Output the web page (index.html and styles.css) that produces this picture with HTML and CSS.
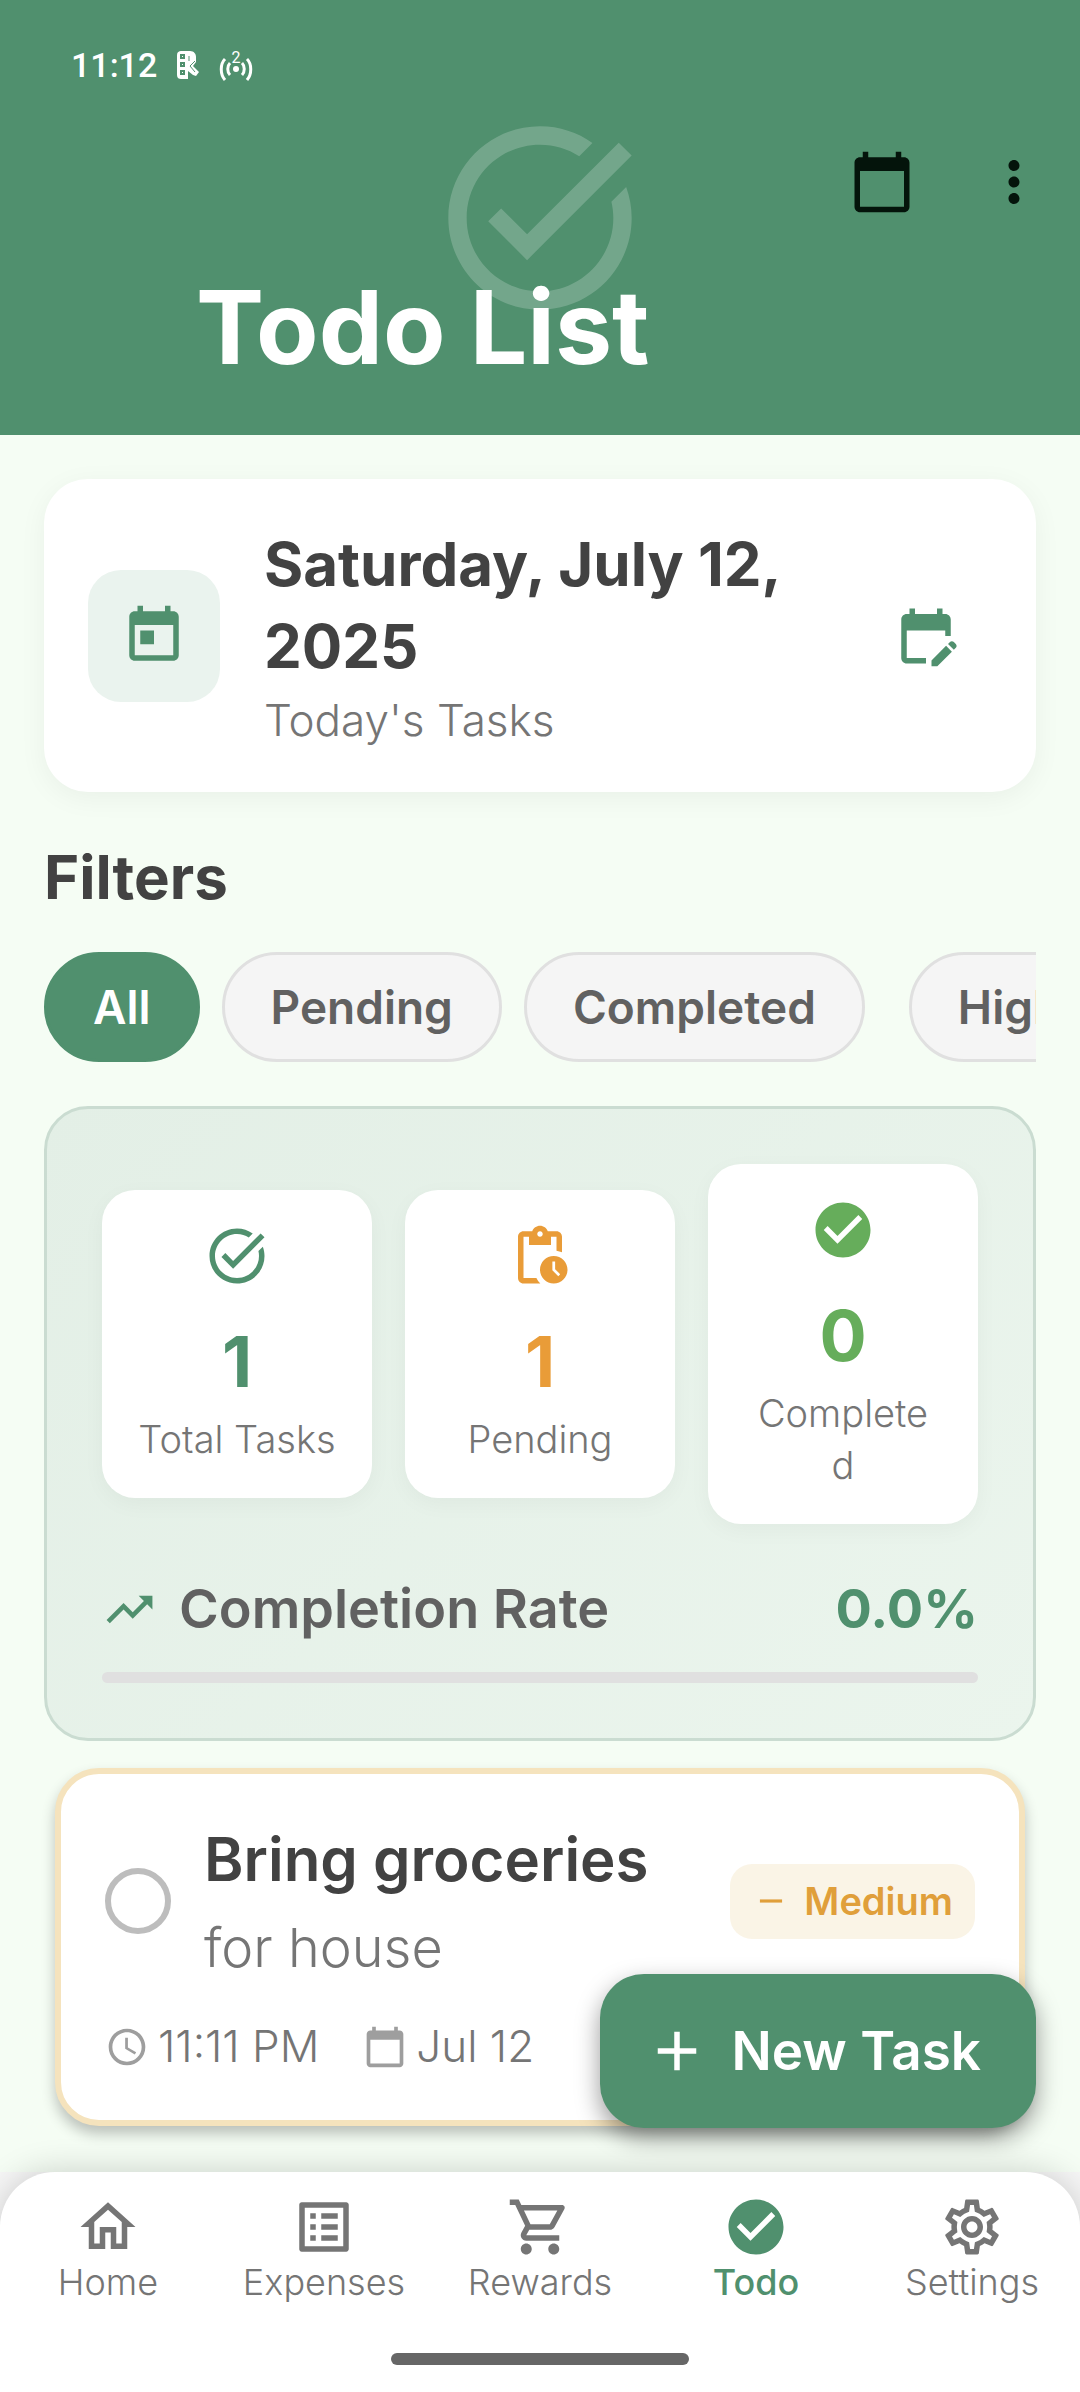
FILE: index.html
```html
<!DOCTYPE html>
<html lang="en">
<head>
<meta charset="utf-8">
<meta name="viewport" content="width=device-width, initial-scale=1">
<title>Todo List</title>
<link rel="stylesheet" href="styles.css">
</head>
<body>
<svg class="sprite" aria-hidden="true">
  <symbol id="task-alt" viewBox="0 0 24 24"><path d="M22 5.18L10.59 16.6l-4.24-4.24 1.41-1.41 2.83 2.83 10-10L22 5.18zM19.79 10.22C19.92 10.79 20 11.39 20 12c0 4.42-3.58 8-8 8s-8-3.58-8-8c0-4.42 3.58-8 8-8 1.58 0 3.04.46 4.28 1.25l1.44-1.44C16.1 2.67 14.13 2 12 2 6.48 2 2 6.48 2 12s4.48 10 10 10 10-4.48 10-10c0-1.19-.22-2.33-.6-3.39l-1.61 1.61z"/></symbol>
  <symbol id="calendar" viewBox="0 0 24 24"><path d="M20 3h-1V1h-2v2H7V1H5v2H4c-1.1 0-2 .9-2 2v16c0 1.1.9 2 2 2h16c1.1 0 2-.9 2-2V5c0-1.1-.9-2-2-2zm0 18H4V8h16v13z"/></symbol>
  <symbol id="more" viewBox="0 0 24 24"><path d="M12 8c1.1 0 2-.9 2-2s-.9-2-2-2-2 .9-2 2 .9 2 2 2zm0 2c-1.1 0-2 .9-2 2s.9 2 2 2 2-.9 2-2-.9-2-2-2zm0 6c-1.1 0-2 .9-2 2s.9 2 2 2 2-.9 2-2-.9-2-2-2z"/></symbol>
  <symbol id="today" viewBox="0 0 24 24"><path d="M19 3h-1V1h-2v2H8V1H6v2H5c-1.11 0-1.99.9-1.99 2L3 19c0 1.1.89 2 2 2h14c1.1 0 2-.9 2-2V5c0-1.1-.9-2-2-2zm0 16H5V8h14v11zM7 10h5v5H7z"/></symbol>
  <symbol id="edit-calendar" viewBox="0 0 24 24"><path d="M12 22H5c-1.11 0-2-.9-2-2L3.01 6c0-1.1.88-2 1.99-2h1V2h2v2h8V2h2v2h1c1.1 0 2 .9 2 2v6h-2v-2H5v10h7v2zM22.13 16.99l.71-.71c.39-.39.39-1.02 0-1.41l-.71-.71c-.39-.39-1.02-.39-1.41 0l-.71.71 2.12 2.12zM21.42 17.7l-5.3 5.3H14v-2.12l5.3-5.3 2.12 2.12z"/></symbol>
  <symbol id="pending" viewBox="0 0 24 24"><path d="M17 12c-2.76 0-5 2.24-5 5s2.24 5 5 5 5-2.24 5-5-2.24-5-5-5zm1.65 7.35L16.5 17.2V14h1v2.79l1.85 1.85-.7.71zM18 3h-3.18C14.4 1.84 13.3 1 12 1s-2.4.84-2.82 2H6c-1.1 0-2 .9-2 2v15c0 1.1.9 2 2 2h6.11c-.59-.57-1.07-1.25-1.42-2H6V5h2v3h8V5h2v5.08c.71.1 1.38.31 2 .6V5c0-1.1-.9-2-2-2zm-6 2c-.55 0-1-.45-1-1s.45-1 1-1 1 .45 1 1-.45 1-1 1z"/></symbol>
  <symbol id="check-circle" viewBox="0 0 24 24"><path d="M12 2C6.48 2 2 6.48 2 12s4.48 10 10 10 10-4.48 10-10S17.52 2 12 2zm-2 15l-5-5 1.41-1.41L10 14.17l7.59-7.59L19 8l-9 9z"/></symbol>
  <symbol id="trending" viewBox="0 0 24 24"><path d="M16 6l2.29 2.29-4.88 4.88-4-4L2 16.59 3.41 18l6-6 4 4 6.3-6.29L22 12V6z"/></symbol>
  <symbol id="clock" viewBox="0 0 24 24"><path d="M11.99 2C6.47 2 2 6.48 2 12s4.47 10 9.99 10C17.52 22 22 17.52 22 12S17.52 2 11.99 2zM12 20c-4.42 0-8-3.58-8-8s3.58-8 8-8 8 3.58 8 8-3.58 8-8 8zm.5-13H11v6l5.25 3.15.75-1.23-4.5-2.67z"/></symbol>
  <symbol id="minus" viewBox="0 0 24 24"><path d="M19 13H5v-2h14v2z"/></symbol>
  <symbol id="plus" viewBox="0 0 24 24"><path d="M19 13h-6v6h-2v-6H5v-2h6V5h2v6h6v2z"/></symbol>
  <symbol id="home" viewBox="0 0 24 24"><path d="M12 5.69l5 4.5V18h-2v-6H9v6H7v-7.81l5-4.5M12 3L2 12h3v8h6v-6h2v6h6v-8h3L12 3z"/></symbol>
  <symbol id="list" viewBox="0 0 24 24"><path d="M19 5v14H5V5h14m1.1-2H3.9c-.5 0-.9.4-.9.9v16.2c0 .4.4.9.9.9h16.2c.4 0 .9-.5.9-.9V3.9c0-.5-.5-.9-.9-.9zM11 7h6v2h-6V7zm0 4h6v2h-6v-2zm0 4h6v2h-6zM7 7h2v2H7zm0 4h2v2H7zm0 4h2v2H7z"/></symbol>
  <symbol id="cart" viewBox="0 0 24 24"><path d="M15.55 13c.75 0 1.41-.41 1.75-1.03l3.58-6.49c.37-.66-.11-1.48-.87-1.48H5.21l-.94-2H1v2h2l3.6 7.59-1.35 2.44C4.52 15.37 5.48 17 7 17h12v-2H7l1.1-2h7.45zM6.16 6h12.15l-2.76 5H8.53L6.16 6zM7 18c-1.1 0-1.99.9-1.99 2S5.9 22 7 22s2-.9 2-2-.9-2-2-2zm10 0c-1.1 0-1.99.9-1.99 2s.89 2 1.99 2 2-.9 2-2-.9-2-2-2z"/></symbol>
  <symbol id="settings" viewBox="0 0 24 24"><path d="M19.43 12.98c.04-.32.07-.64.07-.98 0-.34-.03-.66-.07-.98l2.11-1.65c.19-.15.24-.42.12-.64l-2-3.46c-.09-.16-.26-.25-.44-.25-.06 0-.12.01-.17.03l-2.49 1c-.52-.4-1.08-.73-1.69-.98l-.38-2.65C14.46 2.18 14.25 2 14 2h-4c-.25 0-.46.18-.49.42l-.38 2.65c-.61.25-1.17.59-1.69.98l-2.49-1c-.06-.02-.12-.03-.18-.03-.17 0-.34.09-.43.25l-2 3.46c-.13.22-.07.49.12.64l2.11 1.65c-.04.32-.07.65-.07.98 0 .33.03.66.07.98l-2.11 1.65c-.19.15-.24.42-.12.64l2 3.46c.09.16.26.25.44.25.06 0 .12-.01.17-.03l2.49-1c.52.4 1.08.73 1.69.98l.38 2.65c.03.24.24.42.49.42h4c.25 0 .46-.18.49-.42l.38-2.65c.61-.25 1.17-.59 1.69-.98l2.49 1c.06.02.12.03.18.03.17 0 .34-.09.43-.25l2-3.46c.12-.22.07-.49-.12-.64l-2.11-1.65zm-1.98-1.71c.04.31.05.52.05.73 0 .21-.02.43-.05.73l-.14 1.13.89.7 1.08.84-.7 1.21-1.27-.51-1.04-.42-.9.68c-.43.32-.84.56-1.25.73l-1.06.43-.16 1.13-.2 1.35h-1.4l-.19-1.35-.16-1.13-1.06-.43c-.43-.18-.83-.41-1.23-.71l-.91-.7-1.06.43-1.27.51-.7-1.21 1.08-.84.89-.7-.14-1.13c-.03-.31-.05-.54-.05-.74s.02-.43.05-.73l.14-1.13-.89-.7-1.08-.84.7-1.21 1.27.51 1.04.42.9-.68c.43-.32.84-.56 1.25-.73l1.06-.43.16-1.13.2-1.35h1.39l.19 1.35.16 1.13 1.06.43c.43.18.83.41 1.23.71l.91.7 1.06-.43 1.27-.51.7 1.21-1.07.85-.89.7.14 1.13zM12 8c-2.21 0-4 1.79-4 4s1.79 4 4 4 4-1.79 4-4-1.79-4-4-4zm0 6c-1.1 0-2-.9-2-2s.9-2 2-2 2 .9 2 2-.9 2-2 2z"/></symbol>
</svg>
<div class="app">
  <header class="header">
    <svg class="watermark" aria-hidden="true"><use href="#task-alt"/></svg>
    <div class="status">
      <span class="time">11:12</span>
      <svg class="status-app" viewBox="0 0 22 28" aria-hidden="true">
        <path d="M4 0h9c4 0 6 3 6 6v5l-3 4 6 6-3 4-3-1-5-4v8H4c-2 0-4-1-4-4V4c0-3 2-4 4-4z" fill="#fff"/>
        <path d="M4 4h3v3H4zM4 12h3v3H4zM4 20h3v3H4z" fill="none" stroke="#50906e" stroke-width="2"/>
        <path d="M12 5v5M18 10l-5 5 5 6" fill="none" stroke="#50906e"/>
      </svg>
      <svg class="status-spot" viewBox="0 0 34 36" aria-hidden="true">
        <circle cx="17" cy="22" r="3" fill="#fff"/>
        <path d="M11 16c-3 3-3 9 0 12M23 16c3 3 3 9 0 12M6 12c-5 5-5 15 0 21M28 12c5 5 5 15 0 21" fill="none" stroke="#fff" stroke-width="3"/>
        <text x="17" y="16" text-anchor="middle" class="spot-count">2</text>
      </svg>
    </div>
    <div class="toolbar">
      <button class="icon-button" aria-label="Open calendar"><svg class="icon"><use href="#calendar"/></svg></button>
      <button class="icon-button" aria-label="More options"><svg class="icon"><use href="#more"/></svg></button>
    </div>
    <h1 class="title">Todo List</h1>
  </header>

  <main class="main">
    <section class="date-card">
      <div class="date-tile"><svg class="icon"><use href="#today"/></svg></div>
      <div class="date-text">
        <h2 class="heading">Saturday, July 12, 2025</h2>
        <p class="date-sub">Today's Tasks</p>
      </div>
      <button class="icon-button green" aria-label="Change date"><svg class="icon"><use href="#edit-calendar"/></svg></button>
    </section>

    <h2 class="heading filters-title">Filters</h2>
    <div class="chips">
      <button class="chip selected">All</button>
      <button class="chip">Pending</button>
      <button class="chip">Completed</button>
      <button class="chip priority">High</button>
    </div>

    <section class="stats">
      <div class="stat-grid">
        <div class="stat green"><svg class="icon"><use href="#task-alt"/></svg><strong class="stat-value">1</strong><span class="stat-label">Total Tasks</span></div>
        <div class="stat orange"><svg class="icon"><use href="#pending"/></svg><strong class="stat-value">1</strong><span class="stat-label">Pending</span></div>
        <div class="stat lime"><svg class="icon"><use href="#check-circle"/></svg><strong class="stat-value">0</strong><span class="stat-label">Complete<br>d</span></div>
      </div>
      <div class="rate">
        <svg class="icon-medium green"><use href="#trending"/></svg>
        <span class="rate-label" id="rate-label">Completion Rate</span>
        <strong class="rate-value">0.0%</strong>
      </div>
      <div class="progress" role="progressbar" aria-labelledby="rate-label" aria-valuenow="0" aria-valuemin="0" aria-valuemax="100"></div>
    </section>

    <article class="task">
      <div class="task-top">
        <input class="task-check" type="checkbox" id="task-1">
        <label class="task-text" for="task-1">
          <span class="task-title">Bring groceries</span>
          <span class="task-note">for house</span>
        </label>
        <span class="badge"><svg class="icon-tiny"><use href="#minus"/></svg>Medium</span>
      </div>
      <div class="task-meta">
        <span class="meta"><svg class="icon-small"><use href="#clock"/></svg>11:11 PM</span>
        <span class="meta"><svg class="icon-small"><use href="#calendar"/></svg>Jul 12</span>
      </div>
    </article>

    <button class="fab"><svg class="icon"><use href="#plus"/></svg>New Task</button>
  </main>

  <footer class="footer">
    <nav class="nav">
      <div class="nav-links">
        <a class="nav-link" href="#"><svg class="icon"><use href="#home"/></svg>Home</a>
        <a class="nav-link" href="#"><svg class="icon"><use href="#list"/></svg>Expenses</a>
        <a class="nav-link" href="#"><svg class="icon"><use href="#cart"/></svg>Rewards</a>
        <a class="nav-link active" href="#" aria-current="page"><svg class="icon"><use href="#check-circle"/></svg>Todo</a>
        <a class="nav-link" href="#"><svg class="icon"><use href="#settings"/></svg>Settings</a>
      </div>
      <div class="home-bar"></div>
    </nav>
  </footer>
</div>
</body>
</html>
```
FILE: styles.css
```css
* { box-sizing: border-box; }

body {
  margin: 0;
  background: #f5fdf4;
  color: #424242;
  font-family: Inter, "Open Sans", sans-serif;
}

h1, h2, p { margin: 0; }

button {
  border: 0;
  padding: 0;
  background: none;
  color: inherit;
  font-family: inherit;
  cursor: pointer;
}

.sprite { display: none; }

.icon, .icon-medium, .icon-small, .icon-tiny { flex: none; fill: currentColor; }
.icon { width: 66px; height: 66px; }
.icon-medium { width: 55px; height: 55px; }
.icon-small { width: 44px; height: 44px; color: #9e9e9e; }
.icon-tiny { width: 38px; height: 38px; }

.green { color: #50906e; }
.orange { color: #e99c38; }
.lime { color: #66ad5b; }

.app {
  display: flex;
  flex-direction: column;
  min-height: 100vh;
}

/* Header */
.header {
  position: relative;
  padding-bottom: 49px;
  background: #50906e;
  color: #fff;
}

.watermark {
  position: absolute;
  top: 108px;
  left: calc(50% - 110px);
  width: 220px;
  height: 220px;
  fill: #fff;
  opacity: 0.2;
}

.status {
  display: flex;
  align-items: center;
  gap: 20px;
  height: 116px;
  padding: 14px 71px 0;
  font-family: Roboto, sans-serif;
}

.time { font-size: 34px; font-weight: 500; }
.status-app { width: 22px; height: 28px; }
.status-spot { width: 34px; height: 36px; overflow: visible; }
.spot-count { fill: #fff; font-size: 16px; }

.toolbar {
  display: flex;
  justify-content: flex-end;
  color: #04140b;
}

.icon-button {
  display: grid;
  place-items: center;
  flex: none;
  width: 132px;
  height: 132px;
}

.title {
  position: relative;
  margin-top: 22px;
  padding-left: 196px;
  font-size: 102px;
  line-height: 114px;
  padding-bottom: 2px;
  font-weight: 700;
}

/* Content */
.main {
  position: relative;
  flex: 1;
  padding: 44px 44px 46px;
}

.heading {
  font-size: 60px;
  line-height: 82px;
  font-weight: 700;
}

.date-card {
  display: flex;
  align-items: center;
  gap: 44px;
  padding: 44px;
  border-radius: 44px;
  background: #fff;
  box-shadow: 0 6px 28px rgba(0, 0, 0, 0.05);
}

.date-tile {
  display: grid;
  place-items: center;
  flex: none;
  width: 132px;
  height: 132px;
  border-radius: 33px;
  background: #eaf3ee;
  color: #50906e;
}

.date-text { flex: 1; }

.date-sub {
  margin-top: 6px;
  color: #757575;
  font-size: 44px;
  line-height: 55px;
  font-weight: 300;
}

.filters-title { margin: 44px 0 34px; }

.chips {
  display: flex;
  gap: 22px;
  overflow: hidden;
}

.chip {
  flex: none;
  height: 110px;
  padding: 0 46px;
  border: 3px solid #e0e0e0;
  border-radius: 55px;
  background: #f5f5f5;
  color: #616161;
  font-size: 46px;
  font-weight: 600;
}

.chip.selected {
  border-color: #50906e;
  background: #50906e;
  color: #fff;
}

.chip.priority { margin-left: 22px; }

/* Statistics */
.stats {
  margin-top: 44px;
  padding: 55px;
  border: 3px solid #cadcd1;
  border-radius: 44px;
  background: linear-gradient(135deg, #e3efe6, #ebf5ed);
}

.stat-grid {
  display: grid;
  grid-template-columns: repeat(3, 1fr);
  align-items: center;
  gap: 33px;
}

.stat {
  display: flex;
  flex-direction: column;
  align-items: center;
  min-width: 0;
  padding: 33px;
  border-radius: 33px;
  background: #fff;
  box-shadow: 0 6px 22px rgba(0, 0, 0, 0.04);
}

.stat-value {
  margin-top: 22px;
  font-size: 70px;
  line-height: 102px;
}

.stat-label {
  color: #757575;
  font-size: 38px;
  line-height: 52px;
  font-weight: 300;
  text-align: center;
}

.rate {
  display: flex;
  align-items: center;
  gap: 22px;
  margin: 44px 0 22px;
  line-height: 82px;
}

.rate-label {
  flex: 1;
  color: #616161;
  font-size: 54px;
  font-weight: 600;
}

.rate-value {
  color: #50906e;
  font-size: 54px;
}

.progress {
  height: 11px;
  border-radius: 6px;
  background: #e0e0e0;
}

/* Task */
.task {
  margin: 27px 11px 0;
  padding: 44px;
  border: 6px solid #f5e3bd;
  border-radius: 44px;
  background: #fff;
  box-shadow: 0 8px 14px rgba(0, 0, 0, 0.24);
}

.task-top {
  display: flex;
  align-items: center;
  gap: 33px;
}

.task-check {
  appearance: none;
  flex: none;
  width: 66px;
  height: 66px;
  margin: 0;
  border: 6px solid #bdbdbd;
  border-radius: 50%;
}

.task-text {
  display: flex;
  flex: 1;
  flex-direction: column;
  gap: 11px;
}

.task-title {
  font-size: 60px;
  line-height: 82px;
  font-weight: 600;
  white-space: nowrap;
}

.task-note {
  color: #757575;
  font-size: 54px;
  line-height: 73px;
  font-weight: 300;
}

.badge {
  display: flex;
  align-items: center;
  gap: 14px;
  height: 75px;
  padding: 0 22px;
  border-radius: 22px;
  background: #faf4e6;
  color: #e09f3a;
  font-size: 38px;
  font-weight: 600;
}

.task-meta {
  display: flex;
  gap: 44px;
  margin-top: 33px;
  color: #757575;
  font-size: 44px;
  line-height: 59px;
  font-weight: 300;
}

.meta {
  display: flex;
  align-items: center;
  gap: 9px;
}

.fab {
  position: absolute;
  right: 44px;
  bottom: 44px;
  display: flex;
  align-items: center;
  gap: 22px;
  height: 154px;
  padding: 0 55px 0 44px;
  border-radius: 44px;
  background: #50906e;
  color: #fff;
  font-size: 53px;
  font-weight: 600;
  box-shadow: 0 10px 24px rgba(0, 0, 0, 0.4);
}

/* Bottom navigation */
.footer {
  position: sticky;
  bottom: 0;
  background: #f6f6f6;
}

.nav {
  padding: 22px 0 27px;
  border-radius: 55px 55px 0 0;
  background: #fff;
  box-shadow: 0 0 34px rgba(0, 0, 0, 0.18);
}

.nav-links {
  display: grid;
  grid-template-columns: repeat(5, 1fr);
}

.nav-link {
  display: flex;
  flex-direction: column;
  align-items: center;
  color: #757575;
  font-size: 36px;
  line-height: 44px;
  font-weight: 300;
  text-decoration: none;
}

.nav-link.active {
  color: #50906e;
  font-weight: 500;
}

.home-bar {
  width: 298px;
  height: 12px;
  margin: 49px auto 0;
  border-radius: 6px;
  background: #666;
}
```
